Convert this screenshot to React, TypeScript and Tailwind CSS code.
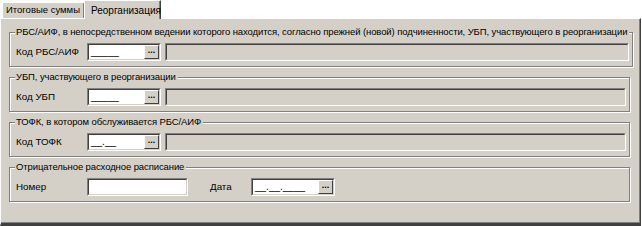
import React from 'react';

const face = 'bg-[#d4d0c8]';

function Sunken({ className = '', children }: { className?: string; children?: React.ReactNode }) {
  return (
    <div className={`border border-t-[#808080] border-l-[#808080] border-b-white border-r-white ${className}`}>
      <div className="h-full border border-t-[#404040] border-l-[#404040] border-b-[#d4d0c8] border-r-[#d4d0c8] flex items-center">
        {children}
      </div>
    </div>
  );
}

function DotsButton() {
  return (
    <div className="h-full w-[15px] ml-auto bg-[#d4d0c8] border border-t-white border-l-white border-b-[#404040] border-r-[#404040] flex items-center justify-center text-[9px] font-bold leading-none pb-[3px]">
      ...
    </div>
  );
}

function LookupInput({ mask, width }: { mask: string; width: string }) {
  return (
    <Sunken className={`${width} h-[18px] bg-white`}>
      <span className="pl-[2px] text-[10px] leading-none">{mask}</span>
      <DotsButton />
    </Sunken>
  );
}

function Group({ title, children }: { title: string; children: React.ReactNode }) {
  return (
    <fieldset className="border border-[#808080] shadow-[inset_1px_1px_0_white,1px_1px_0_white] pl-[6px] pr-[3px] pt-[5px] pb-[5px] ml-[8px] mr-[10px]">
      <legend className={`${face} pl-[1px] pr-[2px] ml-[-1px] text-[9.5px] tracking-[-0.1px] leading-[12px] whitespace-nowrap relative`}>
        {title}
      </legend>
      {children}
    </fieldset>
  );
}

function CodeRow({ label, mask }: { label: string; mask: string }) {
  return (
    <div className="flex items-center">
      <span className="w-[71px]">{label}</span>
      <LookupInput mask={mask} width="w-[74px]" />
      <Sunken className="ml-[4px] flex-1 h-[18px] bg-[#d4d0c8]" />
    </div>
  );
}

export default function App() {
  return (
    <div
      className="w-[642px] h-[226px] bg-white overflow-hidden text-[9.8px] text-black flex flex-col"
      style={{ fontFamily: '"Liberation Sans", Arial, sans-serif' }}
    >
      {/* Tabs */}
      <div className="h-[18px] flex items-end pl-[2px] relative z-10">
        <div className={`${face} w-[82px] h-[16px] pl-[3px] border-t border-l border-white shadow-[inset_-1px_0_0_#808080] flex items-center text-[9.5px] whitespace-nowrap`}>
          Итоговые суммы
        </div>
        <div className={`${face} w-[77px] h-[19px] pl-[6px] mb-[-1px] border-t border-l border-white border-r border-r-[#404040] shadow-[inset_-1px_0_0_#808080] flex items-start pt-[2px] text-[10px] whitespace-nowrap`}>
          Реорганизация
        </div>
      </div>
      {/* Panel */}
      <div className={`${face} w-[641px] flex-1 border-t border-l border-white border-r border-r-[#404040] border-b-[3px] border-b-[#404040] shadow-[inset_-1px_-1px_0_#808080] flex flex-col gap-[4px] pt-[7px]`}>
        <Group title="РБС/АИФ, в непосредственном ведении которого находится, согласно прежней (новой) подчиненности, УБП, участвующего в реорганизации">
          <CodeRow label="Код РБС/АИФ" mask="_____" />
        </Group>
        <Group title="УБП, участвующего в реорганизации">
          <CodeRow label="Код УБП" mask="_____" />
        </Group>
        <Group title="ТОФК, в котором обслуживается РБС/АИФ">
          <CodeRow label="Код ТОФК" mask="__.__" />
        </Group>
        <Group title="Отрицательное расходное расписание">
          <div className="flex items-center">
            <span className="w-[71px]">Номер</span>
            <Sunken className="w-[101px] h-[18px] bg-white" />
            <span className="ml-[22px] w-[41px]">Дата</span>
            <LookupInput mask="__.__.____" width="w-[84px]" />
          </div>
        </Group>
      </div>
    </div>
  );
}
